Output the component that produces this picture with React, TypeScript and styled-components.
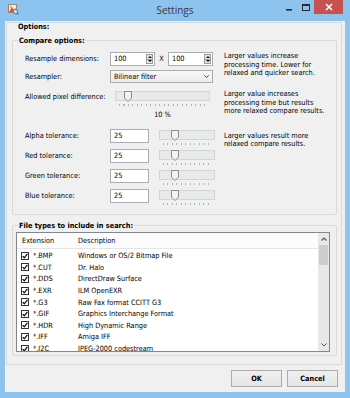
import React from "react";
import styled, { createGlobalStyle } from "styled-components";

const GlobalStyle = createGlobalStyle`
  * { box-sizing: border-box; }
  html, body { margin: 0; padding: 0; width: 350px; height: 398px; overflow: hidden; background: #8cc3ef; }
  body { font-family: "DejaVu Sans Condensed", "DejaVu Sans", sans-serif; font-size: 7.3px; color: #000; }
`;

const Frame = styled.div`
  width: 350px;
  height: 398px;
  background: #8cc3ef;
  display: flex;
  flex-direction: column;
`;

const TitleBar = styled.div`
  height: 21px;
  flex: none;
  display: grid;
  grid-template-columns: 1fr auto 1fr;
  align-items: start;
  padding: 0 7px;
`;

const AppIcon = styled.svg`
  margin-top: 3px;
  justify-self: start;
`;

const Title = styled.div`
  font-family: "Open Sans", "Noto Sans", sans-serif;
  font-size: 10px;
  line-height: 21px;
  color: #3a3a3a;
`;

const Controls = styled.div`
  justify-self: end;
  display: flex;
  align-items: flex-start;
`;

const CaptionButton = styled.div<{ $w: number; $close?: boolean }>`
  width: ${(p) => p.$w}px;
  height: ${(p) => (p.$close ? 14 : 13)}px;
  display: flex;
  align-items: center;
  justify-content: center;
  background: ${(p) => (p.$close ? "#c75050" : "transparent")};
`;

const Client = styled.div`
  flex: 1;
  margin: 0 5px 6px;
  background: #f0f0f0;
  display: flex;
  flex-direction: column;
  padding: 1px 3px 0 1px;
`;

const OptionsPanel = styled.section`
  border: 1px solid #d9d9d9;
  padding: 0 4px 8px 5px;
  display: flex;
  flex-direction: column;
`;

const PanelCaption = styled.div`
  font-weight: bold;
  line-height: 7px;
  height: 7px;
  margin-left: 6px;
`;

const Group = styled.fieldset<{ $top: number }>`
  margin: ${(p) => p.$top}px 0 0 0;
  border: 1px solid #d9d9d9;
  border-radius: 2px;
  padding: 0;
  min-width: 0;
`;

const GroupLegend = styled.legend`
  font-weight: bold;
  line-height: 9px;
  padding: 0 1px;
  margin-left: 5px;
`;

const CompareGrid = styled.div`
  display: grid;
  grid-template-columns: 85px 114px 1fr;
  grid-template-rows: 18px 19px 40px 20px 20px 20px 14px;
  padding: 7px 0 11px 12px;
  align-items: start;
`;

const ListPad = styled.div`
  padding: 2px 6px 3px 3px;
`;

const Label = styled.div<{ $row: number; $offset?: number }>`
  grid-column: 1;
  grid-row: ${(p) => p.$row};
  line-height: 14px;
  margin-top: ${(p) => p.$offset ?? 0}px;
  white-space: nowrap;
`;

const Cell = styled.div<{ $row: number }>`
  grid-column: 2;
  grid-row: ${(p) => p.$row};
  display: flex;
  align-items: flex-start;
`;

const Desc = styled.div<{ $row: string; $offset: number }>`
  grid-column: 3;
  grid-row: ${(p) => p.$row};
  margin-top: ${(p) => p.$offset}px;
  line-height: 8.6px;
  white-space: nowrap;
`;

const TextBox = styled.div<{ $w: number }>`
  width: ${(p) => p.$w}px;
  height: 14px;
  border: 1px solid #abadb3;
  background: #fff;
  display: flex;
  align-items: stretch;
`;

const BoxText = styled.span`
  flex: 1;
  padding-left: 3px;
  line-height: 12px;
`;

const Spin = styled.div`
  width: 7px;
  margin: 1px 1px 1px 0;
  display: flex;
  flex-direction: column;
`;

const SpinHalf = styled.div<{ $down?: boolean }>`
  flex: 1;
  background: #e6e6e6;
  border: 1px solid #9a9a9a;
  ${(p) => (p.$down ? "border-top: none;" : "")}
  display: flex;
  align-items: center;
  justify-content: center;
  &::after {
    content: "";
    border-left: 2px solid transparent;
    border-right: 2px solid transparent;
    ${(p) => (p.$down ? "border-top: 2px solid #111;" : "border-bottom: 2px solid #111;")}
  }
`;

const Times = styled.span`
  width: 13px;
  text-align: center;
  line-height: 14px;
`;

const Combo = styled.div`
  width: 103px;
  height: 13px;
  border: 1px solid #acacac;
  background: linear-gradient(#f7f7f7, #ececec);
  display: flex;
  align-items: center;
  justify-content: space-between;
  padding: 0 3px;
`;

const SliderBox = styled.div<{ $w: number; $left: number; $top: number }>`
  position: relative;
  width: ${(p) => p.$w}px;
  margin-left: ${(p) => p.$left}px;
  margin-top: ${(p) => p.$top}px;
  display: flex;
  flex-direction: column;
`;

const Track = styled.div`
  height: 10px;
  background: #e7eaea;
  border: 1px solid #d4d6d6;
`;

const Ticks = styled.div`
  height: 2px;
  margin: 3px 3px 0 4px;
  background: repeating-linear-gradient(to right, #b4b4b4 0 1px, transparent 1px 4.5px);
`;

const Thumb = styled.svg`
  position: absolute;
  top: 0;
`;

const SliderStack = styled.div`
  display: flex;
  flex-direction: column;
`;

const Percent = styled.div`
  width: 95px;
  margin-left: 5px;
  margin-top: 5px;
  text-align: center;
  line-height: 8px;
`;

const ListBox = styled.div`
  height: 120px;
  border: 1px solid #828790;
  background: #fff;
  display: flex;
  overflow: hidden;
`;

const ListMain = styled.div`
  flex: 1;
  min-width: 0;
  display: flex;
  flex-direction: column;
  overflow: hidden;
`;

const ListHeader = styled.div`
  height: 16px;
  flex: none;
  display: grid;
  grid-template-columns: 56px 1fr;
  align-items: center;
  border-bottom: 1px solid #e5e5e5;
  background: #fcfcfc;
`;

const HeaderCell = styled.div`
  padding-left: 5px;
`;

const Rows = styled.div`
  padding-top: 1px;
  display: flex;
  flex-direction: column;
`;

const Row = styled.div`
  height: 11.6px;
  flex: none;
  display: grid;
  grid-template-columns: 56px 1fr;
  align-items: center;
`;

const ExtCell = styled.div`
  display: flex;
  align-items: center;
  gap: 4px;
  padding-left: 4px;
`;

const DescCell = styled.div`
  padding-left: 5px;
  white-space: nowrap;
`;

const CheckBox = styled.span`
  width: 8px;
  height: 8px;
  border: 1px solid #333;
  background: #fff;
  display: flex;
  align-items: center;
  justify-content: center;
`;

const ScrollBar = styled.div`
  width: 11px;
  flex: none;
  background: #e8e8e8;
  display: flex;
  flex-direction: column;
`;

const ScrollArrow = styled.div`
  height: 12px;
  flex: none;
  display: flex;
  align-items: center;
  justify-content: center;
`;

const ScrollThumb = styled.div`
  height: 20px;
  margin: 0 1px;
  background: #cdcdcd;
`;

const ScrollSpace = styled.div`
  flex: 1;
`;

const ButtonBar = styled.div`
  flex: 1;
  display: flex;
  justify-content: flex-end;
  align-items: center;
  gap: 5px;
  padding-right: 4px;
`;

const Button = styled.div`
  width: 51px;
  height: 17px;
  border: 1px solid #acacac;
  background: linear-gradient(#f0f0f0, #e5e5e5);
  font-weight: bold;
  display: flex;
  align-items: center;
  justify-content: center;
`;

const fileTypes: [string, string][] = [
  ["*.BMP", "Windows or OS/2 Bitmap File"],
  ["*.CUT", "Dr. Halo"],
  ["*.DDS", "DirectDraw Surface"],
  ["*.EXR", "ILM OpenEXR"],
  ["*.G3", "Raw Fax format CCITT G3"],
  ["*.GIF", "Graphics Interchange Format"],
  ["*.HDR", "High Dynamic Range"],
  ["*.IFF", "Amiga IFF"],
  ["*.J2C", "JPEG-2000 codestream"],
];

function Slider({ width, value, max, left, top }: { width: number; value: number; max: number; left: number; top: number }) {
  const x = Math.round((value / max) * (width - 8));
  return (
    <SliderBox $w={width} $left={left} $top={top}>
      <Track />
      <Ticks />
      <Thumb width="8" height="11" viewBox="0 0 8 11" style={{ left: x }}>
        <path d="M0.5 0.5 H7.5 V7 L4 10.5 L0.5 7 Z" fill="#f2f2f2" stroke="#8c8c8c" />
      </Thumb>
    </SliderBox>
  );
}

function SpinField({ width, value }: { width: number; value: string }) {
  return (
    <TextBox $w={width}>
      <BoxText>{value}</BoxText>
      <Spin>
        <SpinHalf />
        <SpinHalf $down />
      </Spin>
    </TextBox>
  );
}

function Check() {
  return (
    <CheckBox>
      <svg width="6" height="6" viewBox="0 0 6 6">
        <path d="M0.6 3.1 L2.3 4.8 L5.4 0.9" fill="none" stroke="#111" strokeWidth="1.3" />
      </svg>
    </CheckBox>
  );
}

export default function App() {
  const tolerances = ["Alpha tolerance:", "Red tolerance:", "Green tolerance:", "Blue tolerance:"];
  return (
    <>
      <GlobalStyle />
      <Frame>
        <TitleBar>
          <AppIcon width="12" height="12" viewBox="0 0 12 12">
            <rect x="1.5" y="1.5" width="8" height="8" fill="#f6ece2" stroke="#9a8676" />
            <path d="M2 9 L5 4 L7 7 L9 5 L9 9 Z" fill="#d9572f" />
            <circle cx="4" cy="4" r="1.2" fill="#f2b233" />
            <circle cx="8.5" cy="8.5" r="2.2" fill="#bfe0f7" stroke="#3d78b5" strokeWidth="0.9" />
            <path d="M10 10 L11.5 11.5" stroke="#3d78b5" strokeWidth="1.2" />
          </AppIcon>
          <Title>Settings</Title>
          <Controls>
            <CaptionButton $w={18}>
              <svg width="18" height="13" viewBox="0 0 18 13">
                <rect x="7" y="9" width="6" height="1.6" fill="#2b2b2b" />
              </svg>
            </CaptionButton>
            <CaptionButton $w={17}>
              <svg width="17" height="13" viewBox="0 0 17 13">
                <rect x="5.5" y="4.5" width="7" height="6" fill="none" stroke="#2b2b2b" />
                <rect x="5" y="4" width="8" height="2" fill="#2b2b2b" />
              </svg>
            </CaptionButton>
            <CaptionButton $w={29} $close>
              <svg width="8" height="8" viewBox="0 0 8 8">
                <path d="M1 1 L7 7 M7 1 L1 7" stroke="#fff" strokeWidth="1.6" />
              </svg>
            </CaptionButton>
          </Controls>
        </TitleBar>
        <Client>
          <OptionsPanel>
            <PanelCaption>Options:</PanelCaption>
            <Group $top={6}>
              <GroupLegend>Compare options:</GroupLegend>
              <CompareGrid>
                <Label $row={1}>Resample dimensions:</Label>
                <Cell $row={1}>
                  <SpinField width={45} value="100" />
                  <Times>X</Times>
                  <SpinField width={45} value="100" />
                </Cell>
                <Desc $row="1 / span 2" $offset={0}>
                  Larger values increase
                  <br />
                  processing time. Lower for
                  <br />
                  relaxed and quicker search.
                </Desc>
                <Label $row={2}>Resampler:</Label>
                <Cell $row={2}>
                  <Combo>
                    <span>Bilinear filter</span>
                    <svg width="5" height="3" viewBox="0 0 5 3">
                      <path d="M0.3 0.3 L2.5 2.5 L4.7 0.3" fill="none" stroke="#333" strokeWidth="0.9" />
                    </svg>
                  </Combo>
                </Cell>
                <Label $row={3} $offset={1}>
                  Allowed pixel difference:
                </Label>
                <Cell $row={3}>
                  <SliderStack>
                    <Slider width={95} value={10} max={100} left={5} top={2} />
                    <Percent>10 %</Percent>
                  </SliderStack>
                </Cell>
                <Desc $row="3" $offset={1}>
                  Larger value increases
                  <br />
                  processing time but results
                  <br />
                  more relaxed compare results.
                </Desc>
                {tolerances.map((t, i) => (
                  <React.Fragment key={t}>
                    <Label $row={4 + i}>{t}</Label>
                    <Cell $row={4 + i}>
                      <TextBox $w={39}>
                        <BoxText>25</BoxText>
                      </TextBox>
                      <Slider width={56} value={25} max={100} left={10} top={1} />
                    </Cell>
                  </React.Fragment>
                ))}
                <Desc $row="4 / span 2" $offset={2.5}>
                  Larger values result more
                  <br />
                  relaxed compare results.
                </Desc>
              </CompareGrid>
            </Group>
            <Group $top={6}>
              <GroupLegend>File types to include in search:</GroupLegend>
              <ListPad>
                <ListBox>
                  <ListMain>
                    <ListHeader>
                      <HeaderCell>Extension</HeaderCell>
                      <HeaderCell>Description</HeaderCell>
                    </ListHeader>
                    <Rows>
                      {fileTypes.map(([ext, desc]) => (
                        <Row key={ext}>
                          <ExtCell>
                            <Check />
                            <span>{ext}</span>
                          </ExtCell>
                          <DescCell>{desc}</DescCell>
                        </Row>
                      ))}
                    </Rows>
                  </ListMain>
                  <ScrollBar>
                    <ScrollArrow>
                      <svg width="6" height="4" viewBox="0 0 6 4">
                        <path d="M0.5 3.5 L3 1 L5.5 3.5" fill="none" stroke="#555" strokeWidth="1.2" />
                      </svg>
                    </ScrollArrow>
                    <ScrollThumb />
                    <ScrollSpace />
                    <ScrollArrow>
                      <svg width="6" height="4" viewBox="0 0 6 4">
                        <path d="M0.5 0.5 L3 3 L5.5 0.5" fill="none" stroke="#555" strokeWidth="1" />
                      </svg>
                    </ScrollArrow>
                  </ScrollBar>
                </ListBox>
              </ListPad>
            </Group>
          </OptionsPanel>
          <ButtonBar>
            <Button>OK</Button>
            <Button>Cancel</Button>
          </ButtonBar>
        </Client>
      </Frame>
    </>
  );
}
